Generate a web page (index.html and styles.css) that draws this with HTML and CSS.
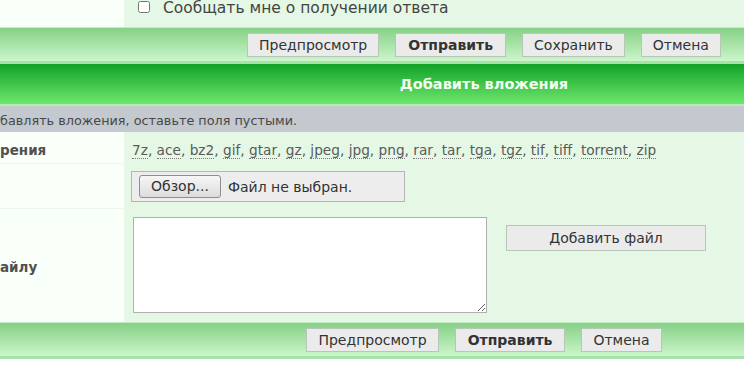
FILE: index.html
```html
<!DOCTYPE html>
<html lang="ru">
<head>
  <meta charset="UTF-8" />
  <title>Ответить</title>
  <link rel="stylesheet" href="styles.css">
</head>
<body>
  <div class="page">

    <div class="grid">
      <div class="label"></div>
      <div class="field notify">
        <label><input type="checkbox"> Сообщать мне о получении ответа</label>
      </div>
    </div>

    <div class="buttons">
      <button>Предпросмотр</button>
      <button class="main">Отправить</button>
      <button>Сохранить</button>
      <button>Отмена</button>
    </div>

    <div class="cat">Добавить вложения</div>
    <div class="hint">бавлять вложения, оставьте поля пустыми.</div>

    <div class="grid">
      <div class="label ext-label"><b>рения</b></div>
      <div class="field ext">
        <p>
          <span>7z</span>, <span>ace</span>, <span>bz2</span>, <span>gif</span>, <span>gtar</span>, <span>gz</span>, <span>jpeg</span>, <span>jpg</span>, <span>png</span>, <span>rar</span>, <span>tar</span>, <span>tga</span>, <span>tgz</span>, <span>tif</span>, <span>tiff</span>, <span>torrent</span>, <span>zip</span>
        </p>
      </div>

      <div class="label file-label"></div>
      <div class="field file-row">
        <div class="filebox">
          <span class="browse">Обзор...</span>
          <span>Файл не выбран.</span>
        </div>
      </div>

      <div class="label comment-label"><b>айлу</b></div>
      <div class="field comment">
        <textarea></textarea>
        <button class="add">Добавить файл</button>
      </div>
    </div>

    <div class="buttons bottom">
      <button>Предпросмотр</button>
      <button class="main">Отправить</button>
      <button>Отмена</button>
    </div>

  </div>
</body>
</html>
```

FILE: styles.css
```css
body {
  margin: 0;
  background: #fff;
  overflow: hidden;
  font-family: 'DejaVu Sans', Verdana, sans-serif;
  font-size: 13px;
  color: #333;
}

.page {
  width: 968px;
}

.grid {
  display: grid;
  grid-template-columns: 124px 1fr;
  gap: 1px;
  background: #e9f8e9;
}

.label {
  background: #f9fff9;
  display: flex;
  align-items: center;
  color: #505050;
  font-size: 13.5px;
}

.field {
  background: #e5f8e5;
  padding: 0 6px;
  display: flex;
  align-items: center;
}

.field p {
  margin: 0;
}

.notify {
  height: 27px;
  align-items: flex-start;
  font-size: 15.5px;
  line-height: 16px;
  color: #444;
  padding-left: 12px;
}

.notify input {
  margin: 1px 8px 0 1px;
  width: 12px;
  height: 12px;
  vertical-align: top;
}

.buttons {
  height: 33px;
  border-top: 1px solid #c4ecc4;
  border-bottom: 3px solid #a8e2a8;
  background: linear-gradient(#86d086, #cbf6cb);
  display: flex;
  justify-content: center;
  align-items: center;
  gap: 16px;
}

.buttons button,
.add {
  font-family: inherit;
  font-size: 14px;
  color: #333;
  background: #ebebeb;
  border: 1px solid #b8c6b8;
  height: 24px;
  padding: 0 11px;
}

.buttons .main {
  font-weight: bold;
  padding: 0 12px;
}

.cat {
  height: 40px;
  border-bottom: 2px solid #b4ecb4;
  background: linear-gradient(#12a226, #6ee66e);
  color: #f4fff4;
  font-weight: bold;
  font-size: 14.5px;
  display: flex;
  justify-content: center;
  align-items: center;
}

.hint {
  height: 26px;
  background: #c3c9cf;
  color: #484848;
  font-size: 12.8px;
  line-height: 29px;
}

.ext-label,
.ext {
  height: 31px;
  padding-top: 5px;
  box-sizing: border-box;
}

.ext {
  color: #5a5a5a;
  font-size: 13.7px;
}

.ext span {
  border-bottom: 1px dotted #777;
  line-height: 13px;
}

.ext p {
  margin-left: 1px;
}

.file-row {
  height: 44px;
}

.filebox {
  width: 272px;
  height: 29px;
  background: #ededed;
  border: 1px solid #b5b5b5;
  display: flex;
  align-items: center;
  gap: 7px;
  font-size: 14px;
  color: #333;
  margin-top: 1px;
}

.browse {
  margin-left: 7px;
  height: 21px;
  padding: 0 11px;
  line-height: 21px;
  border: 1px solid #8e8e8e;
  border-radius: 3px;
  background: linear-gradient(#f6f6f6, #dcdcdc);
}

.comment-label {
  padding-top: 2px;
}

.comment {
  height: 113px;
  align-items: flex-start;
  padding-left: 8px;
}

.comment textarea {
  width: 352px;
  height: 94px;
  margin-top: 8px;
  border: 1px solid #b0b0b0;
  background: #fff;
  resize: both;
  padding: 0;
}

.add {
  margin: 16px 0 0 19px;
  width: 200px;
  height: 26px;
}

.bottom {
  height: 33px;
}
```
